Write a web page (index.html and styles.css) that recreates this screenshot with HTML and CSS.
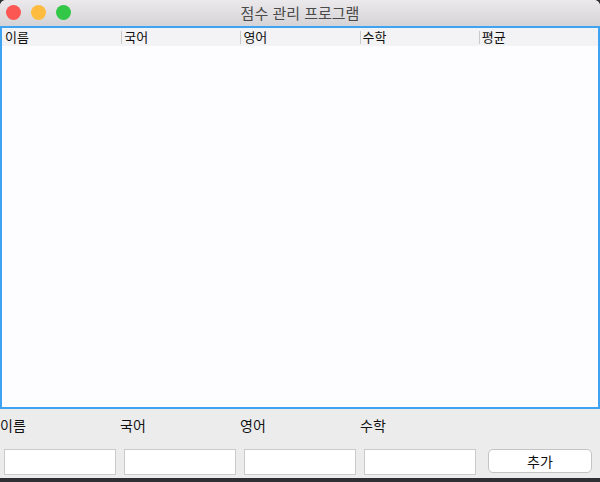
FILE: index.html
```html
<!DOCTYPE html>
<html lang="ko">
<head>
<meta charset="utf-8">
<title>점수 관리 프로그램</title>
<link rel="stylesheet" href="styles.css">
</head>
<body>
<div class="window">
  <div class="titlebar">
    <div class="lights">
      <span class="light red"></span>
      <span class="light yellow"></span>
      <span class="light green"></span>
    </div>
    <div class="title">점수 관리 프로그램</div>
  </div>
  <div class="table">
    <div class="thead">
      <div class="th">이름</div>
      <div class="th">국어</div>
      <div class="th">영어</div>
      <div class="th">수학</div>
      <div class="th">평균</div>
    </div>
    <div class="tbody"></div>
  </div>
  <div class="form">
    <div class="labels">
      <div class="label">이름</div>
      <div class="label">국어</div>
      <div class="label">영어</div>
      <div class="label">수학</div>
    </div>
    <div class="inputs">
      <input class="field" type="text">
      <input class="field" type="text">
      <input class="field" type="text">
      <input class="field" type="text">
      <button class="btn">추가</button>
    </div>
  </div>
</div>
<div class="desktop"></div>
</body>
</html>
```
FILE: styles.css
```css
html, body {
  margin: 0;
  padding: 0;
}
body {
  width: 600px;
  height: 482px;
  overflow: hidden;
  background: #2e3033;
  font-family: "Noto Sans CJK KR", "Noto Sans", sans-serif;
  color: #111;
}
.window {
  width: 600px;
  height: 478px;
  background: #ececec;
  border-radius: 6px 6px 0 0;
  overflow: hidden;
  display: flex;
  flex-direction: column;
}
.titlebar {
  height: 26px;
  flex: none;
  background: linear-gradient(#ebe9eb, #d5d3d5);
  position: relative;
  display: flex;
  align-items: center;
  justify-content: center;
}
.lights {
  position: absolute;
  left: 6px;
  top: 5px;
  display: flex;
  gap: 10px;
}
.light {
  width: 15px;
  height: 15px;
  border-radius: 50%;
  display: block;
}
.red { background: #fc5753; }
.yellow { background: #fdbc40; }
.green { background: #33c748; }
.title {
  font-size: 15px;
  color: #4a4a4a;
  line-height: 26px;
}
.table {
  height: 383px;
  flex: none;
  box-sizing: border-box;
  border: 2px solid #3ea4f2;
  background: #fdfcff;
  display: flex;
  flex-direction: column;
}
.thead {
  height: 18px;
  background: #f3f2f4;
  display: flex;
  flex: none;
}
.th {
  width: 119.2px;
  box-sizing: border-box;
  font-size: 13px;
  line-height: 18px;
  padding-left: 3px;
  position: relative;
  color: #111;
}
.th + .th::before {
  content: "";
  position: absolute;
  left: 0;
  top: 3px;
  height: 13px;
  width: 1px;
  background: #c9c9c9;
}
.tbody {
  flex: 1;
}
.form {
  flex: 1;
  display: flex;
  flex-direction: column;
}
.labels {
  display: flex;
  height: 36px;
  align-items: center;
  padding-bottom: 4px;
  box-sizing: border-box;
}
.label {
  width: 120px;
  font-size: 14px;
  color: #111;
}
.inputs {
  display: flex;
  align-items: flex-start;
  padding-left: 4px;
  padding-top: 4px;
  gap: 8px;
}
.field {
  width: 112px;
  height: 26px;
  box-sizing: border-box;
  border: 1px solid #cbcbcb;
  background: #fff;
  margin: 0;
  padding: 0;
  outline: none;
}
.btn {
  margin-left: 4px;
  width: 104px;
  height: 24px;
  box-sizing: border-box;
  border: 1px solid #c4c4c4;
  border-radius: 5px;
  background: #fff;
  font-family: "Noto Sans CJK KR", "Noto Sans", sans-serif;
  font-size: 14px;
  color: #111;
  padding: 0;
  line-height: 22px;
}
.desktop {
  height: 4px;
  background: #2e3033;
}
```
